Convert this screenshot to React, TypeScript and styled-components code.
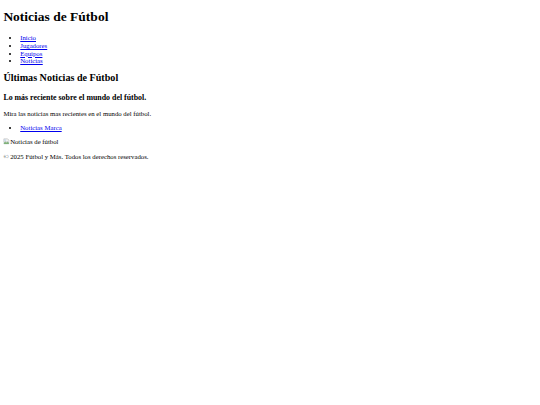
import React from 'react';
import styled, { createGlobalStyle } from 'styled-components';

// the reference is a default-styled page shot at 1280 wide and shrunk to 540
const S = 540 / 1280;
const base = 16 * S;
const px = (n: number) => `${(n * S).toFixed(3)}px`;

const GlobalStyle = createGlobalStyle`
  html, body {
    background: #ffffff;
  }
  body {
    margin: ${px(8)};
    font-family: "Liberation Serif", "Times New Roman", serif;
    font-size: ${base}px;
    color: #000000;
  }
`;

const PageTitle = styled.h1`
  font-size: ${px(32)};
  font-weight: bold;
  margin: 6px 0 ${px(21.44)};
`;

const SectionTitle = styled.h2`
  font-size: ${px(24)};
  font-weight: bold;
  margin: 7.4px 0 9.4px;
`;

const SubTitle = styled.h3`
  font-size: ${px(18.72)};
  font-weight: bold;
  margin: ${px(18.72)} 0;
`;

const Text = styled.p`
  margin: ${px(16)} 0;
`;

const LinkList = styled.ul`
  margin: ${px(16)} 0;
  padding-left: ${px(40)};
  list-style: disc;
`;

const Item = styled.li`
  line-height: ${px(18.2)};
`;

const Link = styled.a`
  color: #0000ee;
  text-decoration: underline;
`;

const BrokenImage = styled.span`
  display: inline-flex;
  align-items: center;
`;

const BrokenIcon = () => (
  <svg width={px(16)} height={px(16)} viewBox="0 0 16 16">
    <path d="M2 2h9l3 3v3l-2 2-2-2-2 2-2-2-2 2-2-2z" fill="#f2f2f2" stroke="#9a9a9a" strokeWidth="1" />
    <path d="M2.5 9l2 2 2-2 2 2 2-2 2 2 1.5-1.5V14h-12z" fill="#7fb46a" stroke="#8aa" strokeWidth="0.8" />
    <rect x="3" y="3.5" width="4" height="3" fill="#bcd6ee" />
  </svg>
);

const navItems = ['Inicio', 'Jugadores', 'Equipos', 'Noticias'];

export default function App(): JSX.Element {
  return (
    <>
      <GlobalStyle />
      <header>
        <PageTitle>Noticias de Fútbol</PageTitle>
        <nav>
          <LinkList>
            {navItems.map((item) => (
              <Item key={item}>
                <Link href="#">{item}</Link>
              </Item>
            ))}
          </LinkList>
        </nav>
      </header>
      <main>
        <section>
          <SectionTitle>Últimas Noticias de Fútbol</SectionTitle>
          <SubTitle>Lo más reciente sobre el mundo del fútbol.</SubTitle>
          <Text>Mira las noticias mas recientes en el mundo del fútbol.</Text>
          <LinkList>
            <Item>
              <Link href="#">Noticias Marca</Link>
            </Item>
          </LinkList>
          <BrokenImage role="img" aria-label="Noticias de fútbol">
            <BrokenIcon />
            Noticias de fútbol
          </BrokenImage>
        </section>
      </main>
      <footer>
        <Text>© 2025 Fútbol y Más. Todos los derechos reservados.</Text>
      </footer>
    </>
  );
}
